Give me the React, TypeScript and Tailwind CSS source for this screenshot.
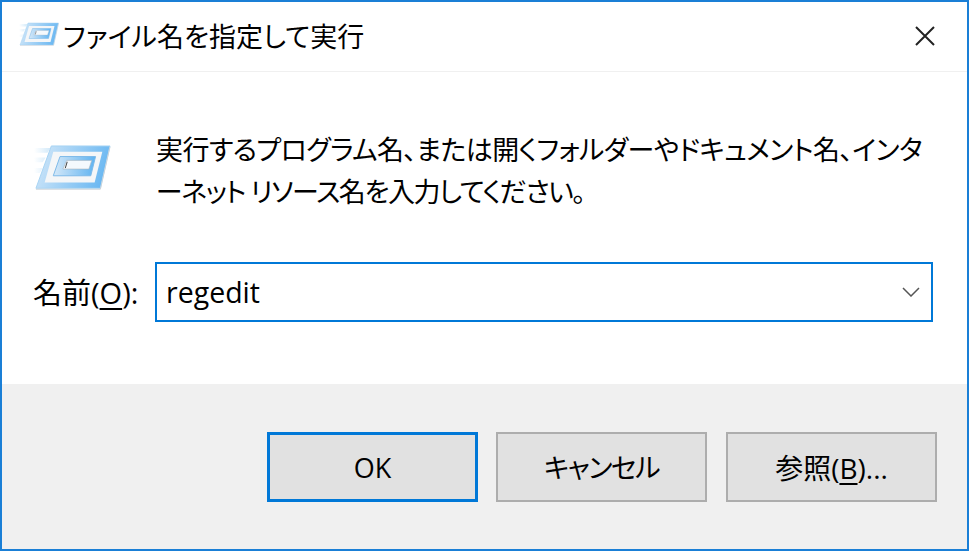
const CJK = "font-['Open_Sans','Noto_Sans_CJK_JP',sans-serif] [font-feature-settings:'palt']";

function RunIcon({ className, id }: { className: string; id: string }) {
  return (
    <svg className={className} viewBox="0 0 80 52" fill="none" aria-hidden="true">
      <defs>
        <linearGradient id={`${id}-outer`} x1="0" y1="0" x2="1" y2="0.2">
          <stop offset="0" stopColor="#d6e9f9" />
          <stop offset="1" stopColor="#6db9f2" />
        </linearGradient>
        <linearGradient id={`${id}-inner`} x1="0" y1="0" x2="1" y2="0">
          <stop offset="0" stopColor="#d5e8f8" />
          <stop offset="1" stopColor="#5fb3f1" />
        </linearGradient>
        <linearGradient id={`${id}-streak`} x1="0" y1="0" x2="1" y2="0">
          <stop offset="0" stopColor="#ffffff" />
          <stop offset="1" stopColor="#bfe0f7" />
        </linearGradient>
      </defs>
      <path d="M0 3H17L14 8H0Z M0 13H12L9 18H0Z M0 24H9L6 29H0Z" fill={`url(#${id}-streak)`} opacity="0.7" />
      <path d="M18 1H79L69 45H2Z" fill={`url(#${id}-outer)`} stroke="#a6d2f2" strokeWidth="1" />
      <path d="M20 7H71L63 39H11Z" fill="#f4f6f8" />
      <path d="M27 12H64L59 32H20Z" fill={`url(#${id}-inner)`} stroke="#7bb8e8" strokeWidth="1" />
      <path d="M34 16H60L57 25H30Z" fill="#f4f9fd" stroke="#a9b4bd" strokeWidth="0.6" />
      <path d="M34.5 17.5L32.5 24" stroke="#3a3a3a" strokeWidth="1" />
      <path d="M2 46H69L79 2" stroke="#cdd3d8" strokeWidth="1" />
    </svg>
  );
}

function DialogButton({ focused, children, className = "" }: { focused?: boolean; children: React.ReactNode; className?: string }) {
  return (
    <button
      className={
        "flex h-[70px] w-[211px] items-center justify-center bg-[#e1e1e1] pt-[2px] text-[27px] text-black " +
        (focused ? "border-[3px] border-[#0078d7] " : "border-2 border-[#adadad] ") +
        className
      }
    >
      {children}
    </button>
  );
}

export default function App() {
  return (
    <div className={`flex h-[551px] w-[969px] flex-col overflow-hidden border-2 border-[#1a7fd6] bg-white text-black ${CJK}`}>
      {/* title bar */}
      <div className="flex h-[70px] shrink-0 items-center border-b border-[#f0f0f0] pb-[2px] pl-[17px] pr-[32px]">
        <RunIcon id="small" className="h-[27px] w-[40px] shrink-0" />
        <span className="ml-[4px] flex-1 pt-[1px] text-[27px] leading-none tracking-[0.1px]">ファイル名を指定して実行</span>
        <svg className="h-[20px] w-[20px]" viewBox="0 0 20 20" aria-hidden="true">
          <path d="M1 1L19 19M19 1L1 19" stroke="#222" strokeWidth="2" fill="none" />
        </svg>
      </div>

      {/* body */}
      <div className="flex flex-1 flex-col">
        <div className="flex pl-[32px] pt-[56px]">
          <RunIcon id="large" className="mt-[17px] h-[50px] w-[77px] shrink-0" />
          <p className="ml-[45px] mt-[1px] whitespace-nowrap text-[27px] leading-[42px]">
            <span className="tracking-[-0.58px]">実行するプログラム名、または開くフォルダーやドキュメント名、インタ</span>
            <br />
            <span className="tracking-[-1.4px]">ーネット リソース名を入力してください。</span>
          </p>
        </div>
        <div className="mt-[49px] flex items-center pl-[31px]">
          <label className="w-[122px] text-[29px] leading-none">
            名前(<span className="underline underline-offset-4">O</span>):
          </label>
          <div className="flex h-[60px] w-[778px] items-center justify-between border-2 border-[#0078d7] pl-[9px] pr-[11px]">
            <span className="text-[28.5px] leading-none">regedit</span>
            <svg className="h-[10px] w-[18px]" viewBox="0 0 18 10" aria-hidden="true">
              <path d="M1 1L9 9L17 1" stroke="#555" strokeWidth="1.5" fill="none" />
            </svg>
          </div>
        </div>
      </div>

      {/* footer */}
      <div className="flex h-[165px] shrink-0 justify-end bg-[#f0f0f0] pr-[30px] pt-[48px]">
        <DialogButton focused>OK</DialogButton>
        <DialogButton className="ml-[18px] tracking-[-1.4px]">キャンセル</DialogButton>
        <DialogButton className="ml-[19px] text-[28px]">
          参照(<span className="underline underline-offset-4">B</span>)...
        </DialogButton>
      </div>
    </div>
  );
}
